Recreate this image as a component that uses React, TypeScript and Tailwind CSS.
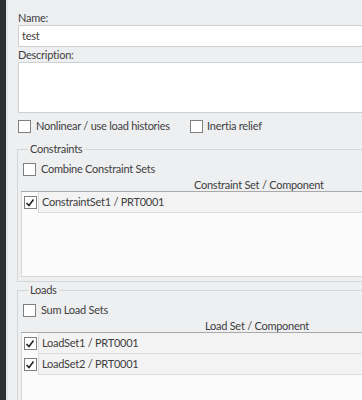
import React from "react";

function Box({ checked = false }: { checked?: boolean }) {
  return (
    <span className="w-[13px] h-[13px] border border-[#7f7f7f] bg-white shrink-0 flex items-center justify-center">
      {checked && (
        <svg width="10" height="10" viewBox="0 0 10 10">
          <path d="M1.5 5 L4 7.5 L8.5 1.5" stroke="#222" strokeWidth="1.6" fill="none" />
        </svg>
      )}
    </span>
  );
}

function Row({ label }: { label: string }) {
  return (
    <div className="flex h-[21px] shrink-0">
      <div className="w-[16px] flex items-center justify-center shrink-0">
        <Box checked />
      </div>
      <div className="flex-1 flex items-center pl-[3px] bg-[#f3f3f3] border-l border-b border-[#dcdcdc] whitespace-nowrap">
        {label}
      </div>
    </div>
  );
}

function Group({
  title,
  check,
  header,
  headerPad,
  rows,
  listH,
}: {
  title: string;
  check: string;
  header: string;
  headerPad: string;
  rows: string[];
  listH: string;
}) {
  return (
    <fieldset className="border border-[#d4d5d7] ml-[-1px] pl-[3px] pb-[4px] min-w-0">
      <legend className="ml-[7px] px-[2px] leading-[14px]">{title}</legend>
      <div className="flex items-center gap-[5px] h-[14px] mt-[6px] pl-[2px] whitespace-nowrap">
        <Box />
        <span>{check}</span>
      </div>
      <div className="h-[16px] flex items-end leading-[12px] border-b border-[#a9a9a9] whitespace-nowrap">
        <div className={headerPad}>{header}</div>
      </div>
      <div className={`bg-[#fbfbfb] border-l border-[#d8d8d8] border-b flex flex-col ${listH}`}>
        {rows.map((r) => (
          <Row key={r} label={r} />
        ))}
      </div>
    </fieldset>
  );
}

export default function App() {
  return (
    <div
      className="flex w-[362px] h-[400px] overflow-hidden bg-[#eeeff1] text-[11px] tracking-[-0.25px] text-[#404040]"
      style={{ fontFamily: "Lato, 'Noto Sans', sans-serif" }}
    >
      <div className="w-[6px] shrink-0 bg-[#2b3030]" />
      <div className="w-[2px] shrink-0 bg-[#e4e5e7]" />
      <div className="flex flex-col pl-[10px] pt-[11px] w-[440px] shrink-0">
        <div className="leading-[14px] shrink-0">Name:</div>
        <div className="h-[22px] shrink-0 bg-white border border-[#cfd0d2] flex items-center pl-[3px]">test</div>
        <div className="leading-[14px] mt-[1px] shrink-0">Description:</div>
        <div className="h-[51px] shrink-0 bg-white border border-[#cfd0d2]" />
        <div className="flex items-center h-[14px] mt-[6px] shrink-0 whitespace-nowrap">
          <div className="flex items-center gap-[5px] w-[172px]">
            <Box />
            <span>Nonlinear / use load histories</span>
          </div>
          <div className="flex items-center gap-[4px]">
            <Box />
            <span>Inertia relief</span>
          </div>
        </div>
        <div className="mt-[9px] shrink-0">
          <Group
            title="Constraints"
            check="Combine Constraint Sets"
            header="Constraint Set / Component"
            headerPad="pl-[173px]"
            rows={["ConstraintSet1 / PRT0001"]}
            listH="h-[85px]"
          />
        </div>
        <div className="mt-[1px] shrink-0">
          <Group
            title="Loads"
            check="Sum Load Sets"
            header="Load Set / Component"
            headerPad="pl-[184px]"
            rows={["LoadSet1 / PRT0001", "LoadSet2 / PRT0001"]}
            listH="h-[85px]"
          />
        </div>
      </div>
    </div>
  );
}
